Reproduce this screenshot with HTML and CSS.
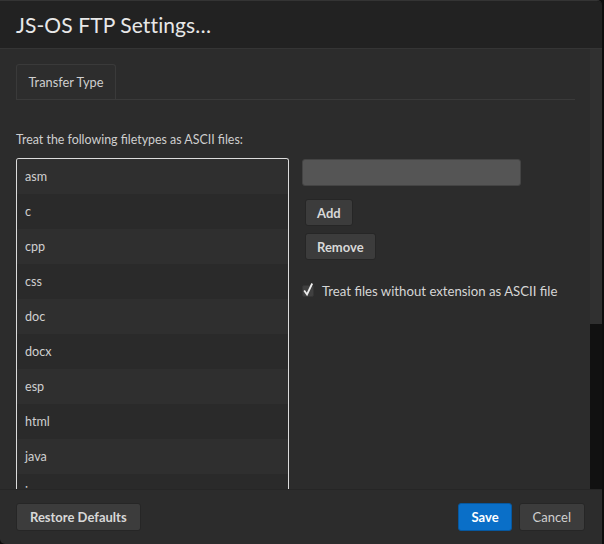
FILE: index.html
```html
<!DOCTYPE html>
<html>
<head>
<meta charset="utf-8">
<link rel="stylesheet" href="styles.css">
</head>
<body>
<div class="dialog">
  <div class="header"><h1 class="title">JS-OS FTP Settings…</h1></div>
  <div class="body">
    <div class="content">
      <div class="tabs"><div class="tab">Transfer Type</div></div>
      <p class="label">Treat the following filetypes as ASCII files:</p>
      <div class="columns">
        <ul class="list">
          <li>asm</li><li>c</li><li>cpp</li><li>css</li><li>doc</li><li>docx</li><li>esp</li><li>html</li><li>java</li><li>js</li>
        </ul>
        <div class="side">
          <input class="field" type="text">
          <button class="btn">Add</button>
          <button class="btn">Remove</button>
          <label class="check">
            <span class="box"><svg class="tick" width="12" height="15" viewBox="0 0 12 15"><path d="M2.2 8.5 L5 12.5 L10.2 1.5" fill="none" stroke="#ededed" stroke-width="1.8"/></svg></span>
            Treat files without extension as ASCII file
          </label>
        </div>
      </div>
    </div>
    <div class="scroll"><div class="thumb"></div></div>
  </div>
  <div class="footer">
    <button class="btn big">Restore Defaults</button>
    <div class="spacer"></div>
    <button class="btn big primary">Save</button>
    <button class="btn big cancel">Cancel</button>
  </div>
</div>
</body>
</html>
```
FILE: styles.css
```css
html, body { margin: 0; padding: 0; background: #0d0d0d; }
body { width: 604px; height: 544px; overflow: hidden; font-family: Lato, "Open Sans", sans-serif; }
.dialog {
  width: 602px; height: 544px; display: flex; flex-direction: column;
  border-top-right-radius: 5px; border-bottom-left-radius: 5px; overflow: hidden;
  border-top: 1px solid #343434; box-sizing: border-box;
}
.header {
  height: 47px; background: #222222; border-bottom: 1px solid #353535;
  display: flex; align-items: center; padding-left: 16px; flex: none;
}
.title { margin: 0; font-size: 21px; font-weight: 400; color: #e8e8e8; letter-spacing: 0.1px; }
.body { flex: 1; display: flex; background: #2c2c2c; min-height: 0; }
.content { flex: 1; padding: 15px 15px 0 16px; overflow: hidden; }
.scroll { width: 12px; display: flex; flex-direction: column; background: #303030; }
.thumb { margin-top: auto; height: 165px; background: #111111; }
.tabs { border-bottom: 1px solid #3a3a3a; height: 35px; display: flex; }
.tab {
  width: 100px; height: 35px; box-sizing: border-box; border: 1px solid #3a3a3a; border-bottom: none;
  border-radius: 3px 3px 0 0; background: #2d2d2d; color: #cfcfcf; font-size: 12.8px;
  display: flex; align-items: center; justify-content: center;
}
.label { margin: 33px 0 0 0; font-size: 12.4px; color: #cfcfcf; height: 14px; line-height: 14px; }
.columns { display: flex; gap: 13px; margin-top: 11px; }
.list {
  list-style: none; margin: 0; padding: 0; width: 273px; box-sizing: border-box;
  border: 1px solid #dcdcdc; border-bottom: none; border-radius: 3px 3px 0 0; height: 340px; overflow: hidden;
}
.list li { height: 35px; line-height: 35px; padding-left: 8px; font-size: 12.6px; color: #d0d0d0; background: #2a2a2a; }
.list li:nth-child(odd) { background: #2f2f2f; }
.side { display: flex; flex-direction: column; align-items: flex-start; padding-top: 1px; }
.field {
  width: 219px; height: 27px; box-sizing: border-box; background: #555555; border: 1px solid #444;
  border-radius: 3px; margin: 0 0 13px 0;
}
.btn {
  font-family: Lato, "Open Sans", sans-serif; font-weight: 700; font-size: 13px; color: #d8d8d8;
  background: #3c3c3c; border: 1px solid #262626; border-radius: 3px; height: 27px; padding: 0 11px;
  margin: 0 0 7px 3px; cursor: default;
}
.check { display: flex; align-items: center; gap: 8px; margin-top: 16px; margin-left: 0; font-size: 13.2px; color: #d6d6d6; }
.box { width: 12px; height: 12px; display: inline-block; position: relative; background: #404040; border: 1px solid #353535; border-radius: 2px; box-sizing: border-box; }
.tick { position: absolute; left: -1px; top: -4px; }
.footer {
  height: 55px; flex: none; background: #2c2c2c; border-top: 1px solid #262626;
  display: flex; align-items: center; padding: 0 16px 0 16px; box-sizing: border-box;
}
.spacer { flex: 1; }
.btn.big { margin: 0; height: 28px; padding: 0 13px; }
.btn.big.primary { padding: 0 12px; }
.btn.big + .btn.big { margin-left: 7px; }
.btn.primary { background: #0a6fc8; border-color: #0658a0; color: #fff; }
.btn.cancel { color: #cfcfcf; font-weight: 400; padding: 0 13px; margin-right: 1px; }
```
